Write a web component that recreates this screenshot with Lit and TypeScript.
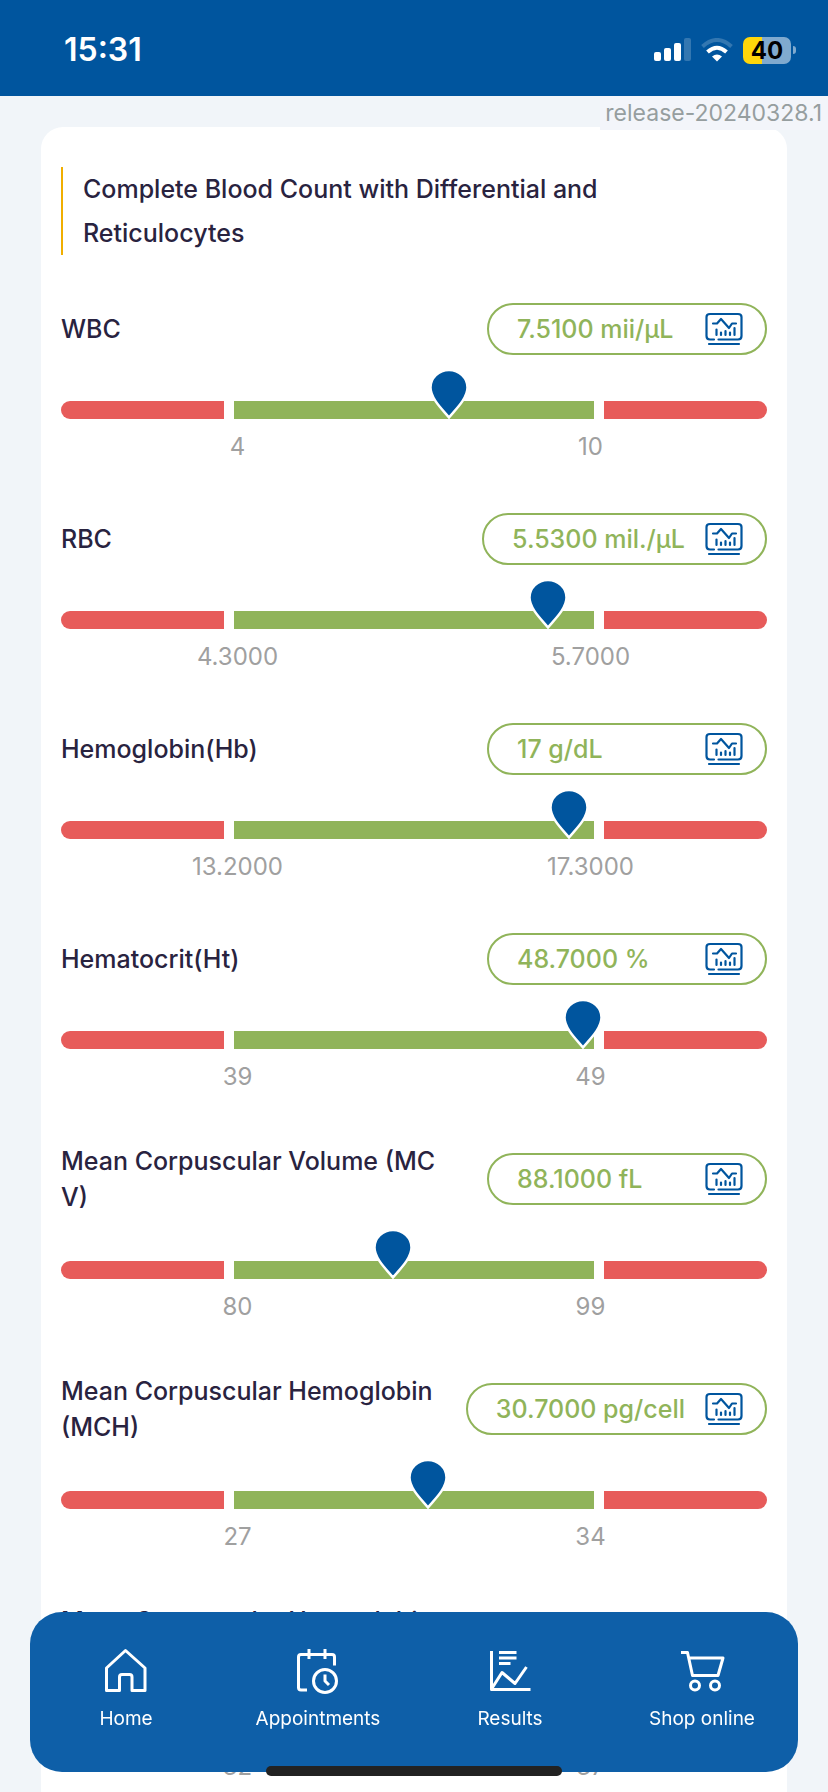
import { LitElement, html, css, svg } from "lit";
import { customElement } from "lit/decorators.js";
import { styleMap } from "lit/directives/style-map.js";

interface Result {
  name: string;
  value: string;
  low: string;
  high: string;
  position: number;
}

const RESULTS: Result[] = [
  { name: "WBC", value: "7.5100 mii/μL", low: "4", high: "10", position: 55 },
  { name: "RBC", value: "5.5300 mil./μL", low: "4.3000", high: "5.7000", position: 69 },
  { name: "Hemoglobin(Hb)", value: "17 g/dL", low: "13.2000", high: "17.3000", position: 72 },
  { name: "Hematocrit(Ht)", value: "48.7000 %", low: "39", high: "49", position: 74 },
  { name: "Mean Corpuscular Volume (MCV)", value: "88.1000 fL", low: "80", high: "99", position: 47 },
  { name: "Mean Corpuscular Hemoglobin (MCH)", value: "30.7000 pg/cell", low: "27", high: "34", position: 52 },
  { name: "Mean Corpuscular Hemoglobin Concentration (MCHC)", value: "34.5000 g/dL", low: "32", high: "37", position: 52 },
];

const chartIcon = html`<svg class="chart" viewBox="0 0 38 34" fill="none" stroke="currentColor" stroke-width="2.200" stroke-linecap="round" stroke-linejoin="round" aria-hidden="true">
  <path d="M9 27.500H5Q1.500 27.500 1.500 24V5Q1.500 2 5 2H33Q36.500 2 36.500 5V24Q36.500 27.500 33 27.500H13.500" />
  <path d="M4 32H34M8 11.500H12L16 7L24 16L27 11.500H31" />
  <path d="M11.500 17.500V23M16 20.500V23M20.500 19V23M25 20.500V23M29.500 16V23" />
</svg>`;

const NAV = [
  {
    label: "Home",
    icon: svg`<path d="M3.500 42.500V20L22.500 2.500L42 20V42.500H29V29Q29 26.500 26.500 26.500H19Q16.500 26.500 16.500 29V42.500Z" />`,
  },
  {
    label: "Appointments",
    icon: svg`<path d="M12 42H6Q3.500 42 3.500 39.500V9Q3.500 6.500 6 6.500H37Q39.500 6.500 39.500 9V17.500M14 1V11M30 1V11" /><circle cx="30" cy="33" r="11.500" /><path d="M30 26.500V33L34 37" />`,
  },
  {
    label: "Results",
    icon: svg`<path d="M4.500 3V41.500H43.500M12 4.500H29.500M12 10H29.500M12 15.500H23.500M4.500 41L15 24.500L28 35.500L39.500 19" />`,
  },
  {
    label: "Shop online",
    icon: svg`<path d="M2 4.500H8.500L13.500 27.500H39L44 10H10" /><circle cx="16" cy="37.500" r="4.500" /><circle cx="36" cy="37.500" r="4.500" />`,
  },
];

@customElement("result-row")
class ResultRow extends LitElement {
  static properties = { result: { attribute: false } };
  declare result: Result;

  static styles = css`
    :host { display: block; margin-bottom: 48px; }
    .head { display: flex; align-items: center; justify-content: space-between; gap: 20px; min-height: 52px; }
    .name { margin: 0; font-size: 25px; line-height: 36px; font-weight: 500; color: #29233f; flex: 1; max-width: 384px; word-break: break-all; }
    .pill { box-sizing: border-box; display: flex; align-items: center; justify-content: space-between; gap: 20px; min-width: 280px; height: 52px; padding: 0 22px 0 28px; border: 2px solid #90b45a; border-radius: 26px; background: #fff; color: #90b45a; font: inherit; font-size: 25px; font-weight: 500; white-space: nowrap; cursor: pointer; }
    .chart { width: 38px; height: 34px; color: #00559e; flex: none; }
    .track { position: relative; margin-top: 46px; display: grid; grid-template-columns: 163fr 360fr 163fr; gap: 10px; height: 18px; }
    .out { background: #e75b5a; }
    .out.low { border-radius: 9px 0 0 9px; }
    .out.high { border-radius: 0 9px 9px 0; }
    .in { background: #90b45a; }
    .pin { position: absolute; bottom: 0; width: 38px; height: 50px; margin-left: -19px; overflow: visible; }
    .bounds { display: grid; grid-template-columns: 1fr 1fr; margin-top: 10px; text-align: center; font-size: 24px; line-height: 36px; color: #a0a0a0; }
  `;

  render() {
    const r = this.result;
    return html`
      <div class="head">
        <h2 class="name">${r.name}</h2>
        <button class="pill" aria-label="${r.name}: ${r.value}"><span>${r.value}</span>${chartIcon}</button>
      </div>
      <div class="track">
        <span class="out low"></span><span class="in"></span><span class="out high"></span>
        <svg class="pin" style=${styleMap({ left: `${r.position}%` })} viewBox="0 0 38 50" aria-hidden="true">
          <path d="M19 48.500C14 42 0.500 30 0.500 18.500A18.500 17.500 0 0 1 37.500 18.500C37.500 30 24 42 19 48.500Z" fill="#00559e" stroke="#fff" stroke-width="2.500" />
        </svg>
      </div>
      <div class="bounds"><span>${r.low}</span><span>${r.high}</span></div>
    `;
  }
}

@customElement("app-root")
class AppRoot extends LitElement {
  static styles = css`
    :host { display: block; height: 100vh; overflow: hidden; background: #f1f5f9; font-family: Inter, "Noto Sans", sans-serif; }
    .status { position: relative; z-index: 2; box-sizing: border-box; display: flex; align-items: center; justify-content: space-between; height: 96px; padding: 4px 32px 0 64px; background: #00559e; color: #fff; }
    .time { font-size: 32px; line-height: 40px; font-weight: 600; }
    .signals { display: flex; align-items: center; gap: 10px; }
    .signal { width: 38px; height: 24px; }
    .wifi { width: 32px; height: 24px; }
    .battery { display: flex; align-items: center; gap: 2px; }
    .cell { width: 48px; height: 27px; border-radius: 7px; background: linear-gradient(90deg, #ffd60a 40%, #80aacf 40%); color: #000; font-size: 24px; line-height: 27px; font-weight: 700; text-align: center; }
    .cap { width: 3px; height: 8px; border-radius: 0 3px 3px 0; background: #80aacf; }
    .release { position: absolute; z-index: 1; top: 96px; right: 0; box-sizing: border-box; padding: 0 6px 0 5px; background: #f3f5fa; color: #969e9f; font-size: 23px; line-height: 34px; }
    .card { margin: 31px 41px 0; padding: 40px 20px; border-radius: 22px; background: #fff; }
    .title { margin: 0 0 48px; padding-left: 20px; border-left: 2px solid #f0ae00; font-size: 25px; line-height: 44px; font-weight: 500; color: #29233f; }
    .title span { display: block; max-width: 560px; }
    .nav { position: fixed; z-index: 3; left: 30px; right: 30px; bottom: 20px; box-sizing: border-box; height: 160px; padding-top: 36px; border-radius: 32px; background: #0e5fa8; display: grid; grid-template-columns: repeat(4, 1fr); }
    .tab { display: flex; flex-direction: column; align-items: center; gap: 12px; color: #fff; text-decoration: none; font-size: 19px; line-height: 26px; }
    .icon { width: 46px; height: 46px; overflow: visible; }
    .indicator { position: fixed; z-index: 4; left: 50%; bottom: 16px; width: 296px; height: 10px; margin-left: -148px; border-radius: 5px; background: #222; }
  `;

  render() {
    return html`
      <header class="status">
        <span class="time">15:31</span>
        <div class="signals">
          <svg class="signal" viewBox="0 0 38 24" fill="#fff" aria-hidden="true">
            <rect x="1" y="14" width="7" height="9" rx="2" /><rect x="11" y="10" width="7" height="13" rx="2" /><rect x="21" y="5" width="7" height="18" rx="2" /><rect x="31" y="0" width="7" height="23" rx="2" opacity=".2" />
          </svg>
          <svg class="wifi" viewBox="0 0 32 24" fill="none" stroke="#fff" stroke-width="4" aria-hidden="true">
            <path d="M1.500 8.500Q16-4.500 30.500 8.500" opacity=".2" /><path d="M6.500 14Q16 5.500 25.500 14" /><path d="M16 23.500L11 18.500Q16 14.500 21 18.500Z" fill="#fff" stroke="none" />
          </svg>
          <div class="battery"><span class="cell">40</span><span class="cap"></span></div>
        </div>
      </header>
      <div class="release">release-20240328.1</div>
      <main class="card">
        <h1 class="title"><span>Complete Blood Count with Differential and Reticulocytes</span></h1>
        ${RESULTS.map((r) => html`<result-row .result=${r}></result-row>`)}
      </main>
      <nav class="nav">
        ${NAV.map((n) => html`<a class="tab" href="#"><svg class="icon" viewBox="0 0 46 46" fill="none" stroke="currentColor" stroke-width="3" stroke-linejoin="round" aria-hidden="true">${n.icon}</svg><span>${n.label}</span></a>`)}
      </nav>
      <div class="indicator"></div>
    `;
  }
}
